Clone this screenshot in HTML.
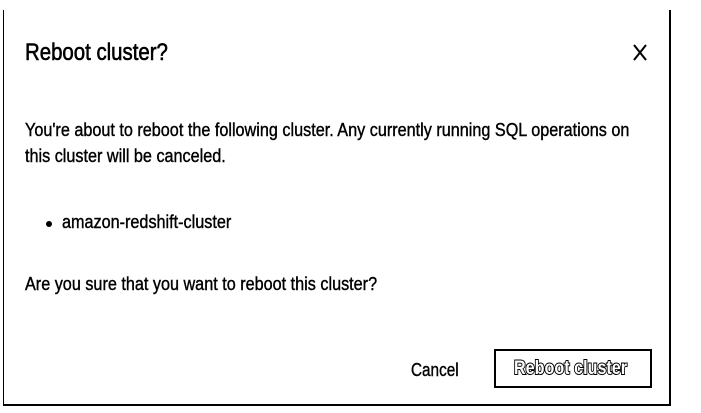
<!DOCTYPE html>
<html><head><style>
body{margin:0;width:701px;height:413px;background:#fff;position:relative;overflow:hidden;font-family:"Liberation Sans",sans-serif;color:#000}
.t{position:absolute;white-space:nowrap;transform-origin:0 0;line-height:1;-webkit-text-stroke:0.4px #000}
</style></head><body>
<div style="position:absolute;left:3px;top:10px;width:1px;height:396px;background:#000"></div>
<div style="position:absolute;left:669px;top:10px;width:2px;height:396px;background:#000"></div>
<div style="position:absolute;left:3px;top:404px;width:668px;height:2px;background:#000"></div>
<div class="t" style="left:25px;top:41px;font-size:24px;transform:scaleX(0.85);-webkit-text-stroke:0.6px #000">Reboot cluster?</div>
<svg style="position:absolute;left:632px;top:44px" width="16" height="17" viewBox="0 0 16 17"><path d="M2 1L14 16M14 1L2 16" stroke="#000" stroke-width="2"/></svg>
<div class="t" style="left:25px;top:121px;font-size:18px;transform:scaleX(0.9)">You're about to reboot the following cluster. Any currently running SQL operations on</div>
<div class="t" style="left:25px;top:147px;font-size:18px;transform:scaleX(0.9)">this cluster will be canceled.</div>
<div style="position:absolute;left:46px;top:221px;width:6px;height:6px;border-radius:50%;background:#000"></div>
<div class="t" style="left:62px;top:213px;font-size:18px;transform:scaleX(0.9)">amazon-redshift-cluster</div>
<div class="t" style="left:25px;top:275px;font-size:18px;transform:scaleX(0.9)">Are you sure that you want to reboot this cluster?</div>
<div class="t" style="left:411px;top:361px;font-size:18px;transform:scaleX(0.85)">Cancel</div>
<div style="position:absolute;left:494px;top:349px;width:154px;height:35px;border:2px solid #000"></div>
<div class="t" style="left:514px;top:359px;font-size:19px;font-weight:bold;color:#fff;-webkit-text-stroke:2px #000;paint-order:stroke fill;transform:scaleX(0.85)">Reboot cluster</div>
</body></html>
